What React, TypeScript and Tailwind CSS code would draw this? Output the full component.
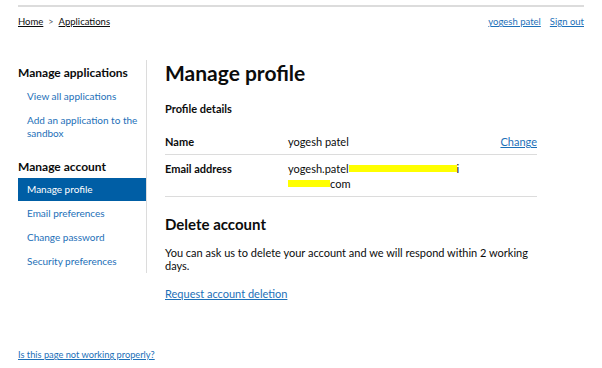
import React from "react";

const font = { fontFamily: "Lato, 'Noto Sans', Arial, sans-serif" };

function SideLink({ label, active }: { label: React.ReactNode; active?: boolean }) {
  if (active) {
    return (
      <div className="bg-[#005ea5] text-white pl-[9px] py-[5px] text-[10px] leading-[13px]">{label}</div>
    );
  }
  return (
    <div className="pl-[9px] py-[5px] text-[10px] leading-[13px] text-[#1d70b8]">{label}</div>
  );
}

export default function App() {
  return (
    <div className="w-[602px] h-[368px] bg-white text-[#0b0c0c] overflow-hidden" style={font}>
      <div className="mx-[18px] pt-[5px]">
        {/* Header */}
        <div className="border-t-2 border-[#dcdcdc]" />
        <div className="flex items-center justify-between mt-[8px] text-[9.5px] leading-[14px]">
          <div className="flex items-center gap-[5px]">
            <a className="underline text-[#0b0c0c]">Home</a>
            <span className="text-[#505a5f] text-[9px]">&gt;</span>
            <a className="underline text-[#0b0c0c]">Applications</a>
          </div>
          <div className="flex items-center gap-[9px] text-[#1d70b8]">
            <a className="underline">yogesh patel</a>
            <a className="underline">Sign out</a>
          </div>
        </div>

        {/* Body */}
        <div className="flex mt-[31px]">
          {/* Sidebar */}
          <div className="w-[129px] border-r border-[#dcdcdc] pt-[5px] self-start shrink-0">
            <div className="font-bold text-[12px] leading-[16px]">Manage applications</div>
            <div className="mt-[4px] flex flex-col gap-[1px]">
              <SideLink label="View all applications" />
              <SideLink
                label={
                  <>
                    Add an application to the
                    <br />
                    sandbox
                  </>
                }
              />
            </div>
            <div className="font-bold text-[12px] leading-[16px] mt-[14px]">Manage account</div>
            <div className="mt-[3px] flex flex-col gap-[1px]">
              <SideLink label="Manage profile" active />
              <SideLink label="Email preferences" />
              <SideLink label="Change password" />
              <SideLink label="Security preferences" />
            </div>
          </div>

          {/* Main */}
          <div className="ml-[18px] w-[372px]">
            <h1 className="font-bold text-[21px] leading-[26px]">Manage profile</h1>
            <h2 className="font-bold text-[11px] leading-[14px] mt-[16px]">Profile details</h2>
            <div className="mt-[18px] text-[11px] leading-[15px]">
              <div className="flex border-b border-[#dcdcdc] pb-[5px]">
                <div className="w-[123px] font-bold">Name</div>
                <div className="flex-1">yogesh patel</div>
                <a className="underline text-[#1d70b8]">Change</a>
              </div>
              <div className="flex border-b border-[#dcdcdc] pt-[6px] pb-[5px]">
                <div className="w-[123px] font-bold">Email address</div>
                <div className="flex-1">
                  <div className="flex items-center">
                    yogesh.patel
                    <span className="inline-block w-[108px] h-[7px] bg-[#ffff00]" />
                    <span>i</span>
                  </div>
                  <div className="flex items-center">
                    <span className="inline-block w-[42px] h-[7px] bg-[#ffff00]" />
                    com
                  </div>
                </div>
              </div>
            </div>
            <h2 className="font-bold text-[15px] leading-[20px] mt-[17px]">Delete account</h2>
            <p className="text-[11px] leading-[13px] mt-[12px] pr-[8px]">
              You can ask us to delete your account and we will respond within 2 working days.
            </p>
            <a className="block underline text-[#1d70b8] text-[11px] leading-[14px] mt-[15px]">
              Request account deletion
            </a>
          </div>
        </div>

        {/* Footer */}
        <a className="block underline text-[#1d70b8] text-[9.25px] leading-[14px] mt-[47px]">
          Is this page not working properly?
        </a>
      </div>
    </div>
  );
}
